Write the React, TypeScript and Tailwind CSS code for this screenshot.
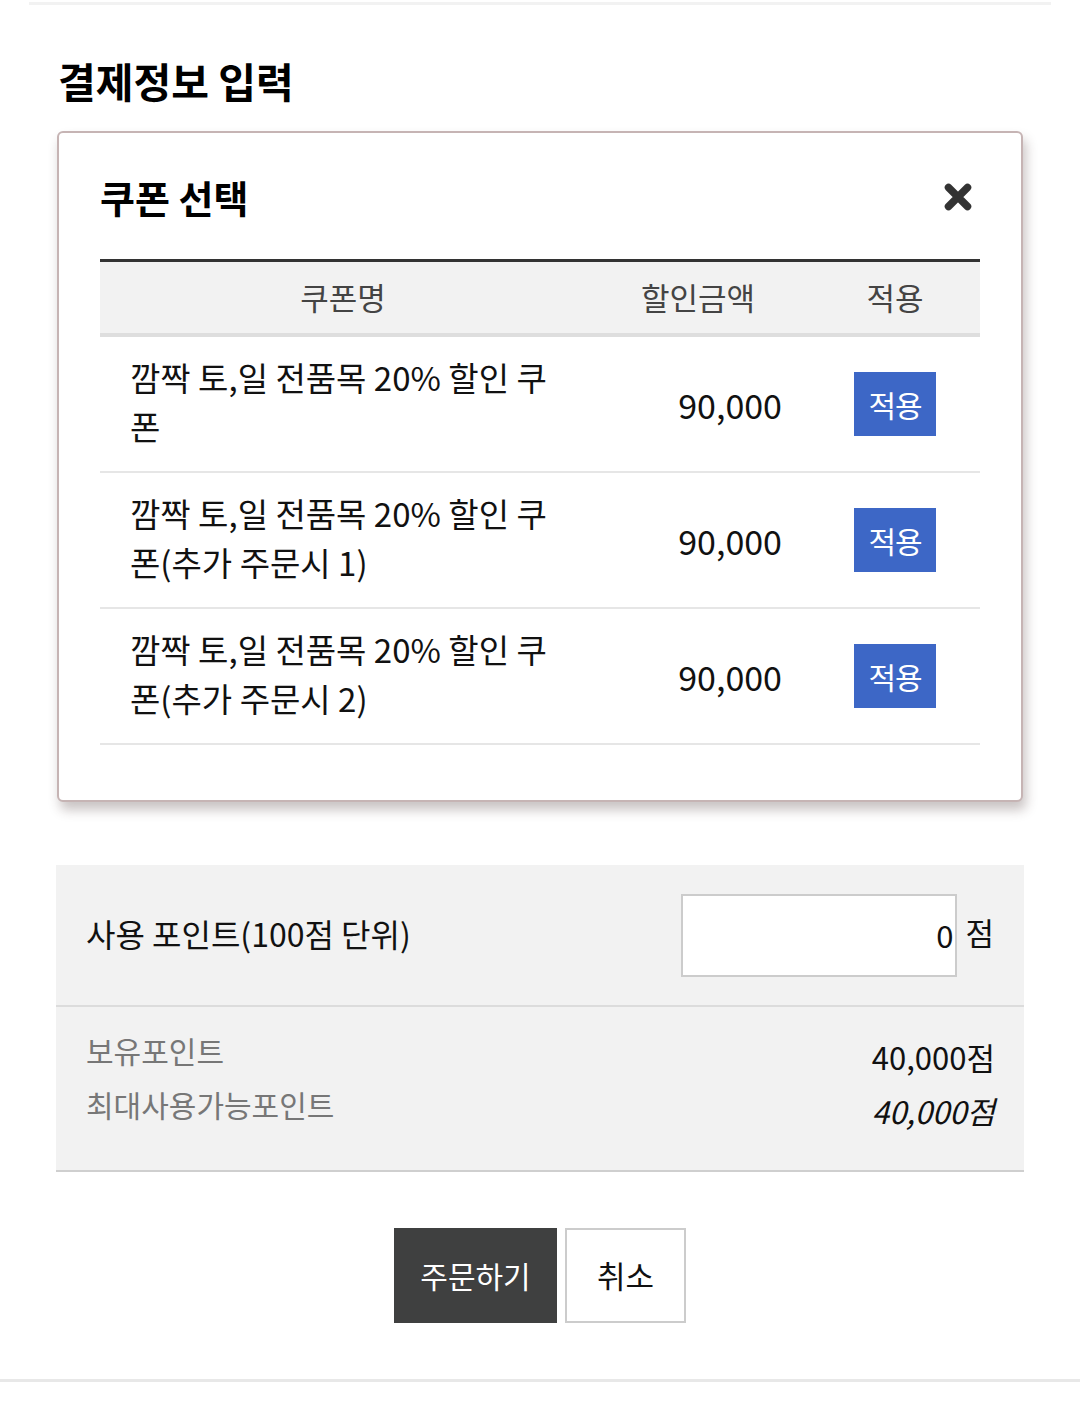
import React from 'react';

const COUPONS = [
  { id: 1, name: '깜짝 토,일 전품목 20% 할인 쿠폰', amount: '90,000' },
  { id: 2, name: '깜짝 토,일 전품목 20% 할인 쿠폰(추가 주문시 1)', amount: '90,000' },
  { id: 3, name: '깜짝 토,일 전품목 20% 할인 쿠폰(추가 주문시 2)', amount: '90,000' },
];

function CloseIcon() {
  return (
    <svg width="28" height="28" viewBox="0 0 28 28" className="block">
      <path d="M4.5 4.5 L23.5 23.5 M23.5 4.5 L4.5 23.5" stroke="#333" strokeWidth="7.5" strokeLinecap="round" />
    </svg>
  );
}

export default function App() {
  return (
    <div className="w-[1080px] min-h-[1406px] bg-white text-[#222] font-['Noto_Sans_CJK_KR',sans-serif]">
      <div className="pt-[2px] px-[29px]">
        <div className="h-[3px] bg-[#f2f2f2]" />
      </div>

      <div className="px-[56px]">
        <h2 className="pt-[46px] pl-[2px] h-[126px] text-[41px] leading-[58px] font-bold text-black">
          결제정보 입력
        </h2>

        {/* coupon modal */}
        <div className="mx-[1px] border-2 border-[#c6b4b4] rounded-[6px] bg-white px-[41px] pb-[55px] shadow-[3px_8px_12px_rgba(60,40,40,0.28)]">
          <div className="h-[126px] flex items-center justify-between">
            <h3 className="text-[38px] font-bold text-black">쿠폰 선택</h3>
            <div className="mr-[8px] mt-[2px]">
              <CloseIcon />
            </div>
          </div>

          <div className="border-t-[3px] border-[#333]">
            <div className="grid grid-cols-[486px_224px_170px] h-[75px] bg-[#f2f2f2] border-b-4 border-[#dedede] text-[31px] text-[#444]">
              <div className="flex items-center justify-center">쿠폰명</div>
              <div className="flex items-center justify-center">할인금액</div>
              <div className="flex items-center justify-center">적용</div>
            </div>

            {COUPONS.map((c) => (
              <div
                key={c.id}
                className="grid grid-cols-[486px_224px_170px] h-[136px] border-b-2 border-[#e6e6e6] text-[33px] text-[#111]"
              >
                <div className="flex items-center pl-[30px] pr-[28px] pb-[5px] leading-[49px]">
                  {c.name}
                </div>
                <div className="flex items-center justify-end pr-[28px] text-[34px]">{c.amount}</div>
                <div className="flex items-center justify-center">
                  <button className="w-[82px] h-[64px] bg-[#3d67c6] text-white text-[30px] tracking-[-1px]">
                    적용
                  </button>
                </div>
              </div>
            ))}
          </div>
        </div>

        {/* points */}
        <div className="mt-[63px] bg-[#f2f2f2]">
          <div className="h-[142px] flex items-center justify-between pl-[30px] pr-[30px] border-b-2 border-[#dcdcdc]">
            <span className="text-[32px] text-[#111] mt-[-4px]">사용 포인트(100점 단위)</span>
            <div className="flex items-center gap-[8px]">
              <div className="w-[276px] h-[83px] bg-white border-2 border-[#cccccc] flex items-center justify-end pr-[2px] text-[31px] text-[#111]">
                0
              </div>
              <span className="text-[31px] text-[#111] mb-[6px]">점</span>
            </div>
          </div>
          <div className="h-[165px] flex justify-between pl-[30px] pr-[29px] border-b-2 border-[#cfcfcf]">
            <div className="pt-[16px] leading-[54px] text-[30px] text-[#777]">
              <div>보유포인트</div>
              <div>최대사용가능포인트</div>
            </div>
            <div className="pt-[23px] leading-[54px] text-[31px] text-right text-[#111]">
              <div>40,000점</div>
              <div className="italic">40,000점</div>
            </div>
          </div>
        </div>

        <div className="pt-[56px] flex justify-center gap-[8px]">
          <button className="w-[163px] h-[95px] bg-[#3f4040] text-white text-[30px]">주문하기</button>
          <button className="w-[121px] h-[95px] bg-white border-2 border-[#cccccc] text-[#111] text-[31px]">
            취소
          </button>
        </div>
      </div>

      <div className="mt-[56px] h-[3px] bg-[#e8e8e8]" />
    </div>
  );
}
